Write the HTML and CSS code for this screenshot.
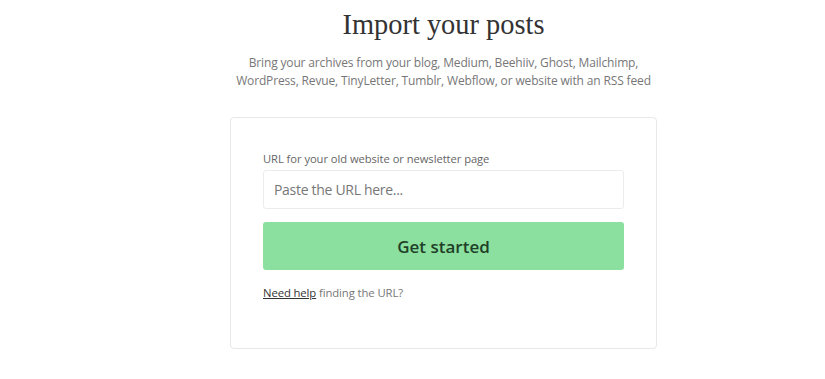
FILE: index.html
```html
<!DOCTYPE html>
<html lang="en">
<head>
    <meta charset="UTF-8">
    <meta name="viewport" content="width=device-width, initial-scale=1.0">
    <title>Import your posts</title>
    <link rel="stylesheet" href="styles.css">
</head>
<body>
    <div class="page">
        <h1 class="title">Import your posts</h1>
        <p class="subtitle">Bring your archives from your blog, Medium, Beehiiv, Ghost, Mailchimp,<br>WordPress, Revue, TinyLetter, Tumblr, Webflow, or website with an RSS feed</p>

        <div class="import-card">
            <form class="import-form">
                <label for="old-url">URL for your old website or newsletter page</label>
                <input type="text" id="old-url" name="old-url" placeholder="Paste the URL here...">
                <button type="submit">Get started</button>
            </form>
            <p class="help"><a href="#">Need help</a> finding the URL?</p>
        </div>
    </div>
</body>
</html>
```

FILE: styles.css
```css
body {
    font-family: "Open Sans", "Noto Sans", sans-serif;
    background-color: #fff;
    margin: 0;
    color: #333;
}
.page {
    display: flex;
    flex-direction: column;
    align-items: center;
    padding-left: 62px;
}
.title {
    font-family: "Liberation Serif", serif;
    font-weight: normal;
    font-size: 28.4px;
    line-height: 32px;
    color: #333;
    margin: 9px 0 0;
}
.subtitle {
    font-size: 12px;
    letter-spacing: -0.15px;
    line-height: 18px;
    color: #777;
    text-align: center;
    margin: 13px 0 0;
}
.import-card {
    box-sizing: border-box;
    width: 427px;
    margin-top: 27px;
    border: 1px solid #e8e8e8;
    border-radius: 4px;
    padding: 33px 32px 48px;
}
.import-form {
    display: flex;
    flex-direction: column;
}
label {
    font-size: 11.2px;
    letter-spacing: -0.05px;
    color: #666;
    line-height: 16px;
    margin-bottom: 3px;
}
input[type="text"] {
    box-sizing: border-box;
    height: 39px;
    padding: 0 10px;
    border: 1px solid #ececec;
    border-radius: 3px;
    font-family: inherit;
    font-size: 14px;
    letter-spacing: -0.3px;
    color: #333;
}
input::placeholder {
    color: #777;
}
button {
    height: 48px;
    margin-top: 13px;
    background-color: #8be09f;
    color: #1f3f28;
    font-family: inherit;
    font-size: 17px;
    font-weight: 600;
    border: none;
    border-radius: 3px;
    cursor: pointer;
}
.help {
    font-size: 11.3px;
    letter-spacing: -0.1px;
    color: #777;
    margin: 15px 0 0;
}
.help a {
    color: #333;
}
```
